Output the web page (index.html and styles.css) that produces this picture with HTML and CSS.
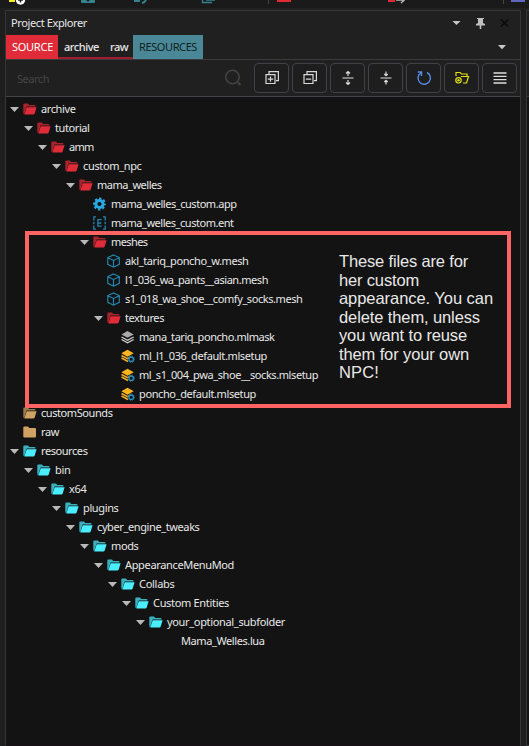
FILE: index.html
```html
<!DOCTYPE html>
<html lang="en">
<head>
<meta charset="utf-8">
<title>Project Explorer</title>
<link rel="stylesheet" href="styles.css">
</head>
<body>
<svg class="defs" width="0" height="0">
  <symbol id="open" viewBox="0 0 14 12"><path d="M.3 10.5V1.6Q.3.6 1.3.6H5L6.2 2H11.500Q12.500 2 12.500 3V3.500H3.500L1.300 11Z" fill="currentColor" opacity=".72"/><path d="M3.700 4.200H13.600L11.700 10.600Q11.400 11.400 10.700 11.400H1.300Z" fill="currentColor"/></symbol>
  <symbol id="closed" viewBox="0 0 14 12"><path d="M.3 1.500Q.3.500 1.300.500H5L6.300 1.900H12Q13 1.900 13 2.900V10.400Q13 11.400 12 11.400H1.300Q.3 11.400.3 10.400Z" fill="currentColor"/></symbol>
  <symbol id="gear" viewBox="0 0 14 14"><circle cx="6.500" cy="7" r="3.600" fill="none" stroke="#29a9e2" stroke-width="3"/><circle cx="6.500" cy="7" r="5.500" fill="none" stroke="#29a9e2" stroke-width="2" stroke-dasharray="2.300 2.020" stroke-dashoffset="1.100"/></symbol>
  <symbol id="ent" viewBox="0 0 14 14"><g fill="none" stroke="#2583b0" stroke-width="1.300"><path d="M3 .8H.8V4.500M.8 5.800V8.200M.8 9.500V13.200H3M10 .8H12.200V4.500M12.200 5.800V8.200M12.200 9.500V13.200H10"/><path d="M8.700 3.700H4.900V10.200H8.700M4.900 7H8.300"/></g></symbol>
  <symbol id="cube" viewBox="0 0 14 14"><path d="M6.500.900 12.300 3.500V10.300L6.500 13.200.8 10.300V3.500ZM.8 3.700 6.500 6.400 12.300 3.700M6.500 6.400V13" fill="none" stroke="#2387b3" stroke-width="1.150"/></symbol>
  <symbol id="mask" viewBox="0 0 14 14"><path d="M.5 4.500 6.500 1 12.700 4.500 6.500 7.800Z" fill="#aaa"/><path d="M.5 7 6.500 10.200 12.700 7M.5 9.500 6.500 12.700 12.700 9.500" fill="none" stroke="#d6d6d6" stroke-width="1.200"/></symbol>
  <symbol id="setup" viewBox="0 0 14 14"><path d="M.4 4.300 6.500.7 12.700 4.300 6.500 7.700Z" fill="#ffb51d"/><path d="M.5 6.500 6.500 9.700 10 8M.5 9 7 12.500" fill="none" stroke="#f4ae23" stroke-width="1.500"/><circle cx="10.200" cy="10.200" r="2.200" fill="#131313" stroke="#2d8fbd" stroke-width="1.300"/><circle cx="10.200" cy="10.200" r="3.200" fill="none" stroke="#2d8fbd" stroke-width=".9" stroke-dasharray="1.250 1.260"/></symbol>
</svg>
<div class="window">
  <header class="strip">
    <svg width="529" height="10" viewBox="0 0 529 10">
      <path d="M9 0H15V2H9Z" fill="#f8ec20"/><circle cx="20.500" cy="0" r="4.700" fill="#fff"/><path d="M18 0H23M20.500 0V2.500" stroke="#222" stroke-width="1.500"/>
      <path d="M81 0H95V2Q95 3 94 3H82Q81 3 81 2Z" fill="#36828e"/><circle cx="88" cy="0" r="1.500" fill="#1c1c1c"/>
      <path d="M134 1H140M142 3Q145 2 146 0" fill="none" stroke="#36828e" stroke-width="2"/>
      <path d="M202.500 0V2.500H212M206 0H215" fill="none" stroke="#36828e" stroke-width="1.300"/>
      <path d="M277 0H291V2H277ZM388 0H395V2H388Z" fill="#df2935"/>
      <path d="M396 0H404M401 3 404.500 0" fill="none" stroke="#bbb" stroke-width="1.400"/>
      <path d="M511 0H525V2H511Z" fill="#6066bd"/><path d="M268.500 0V4M503.500 0V4" stroke="#444"/>
    </svg>
  </header>
  <div class="workspace">
    <main class="panel">
      <div class="titlebar">
        <span class="fit" data-width="76">Project Explorer</span>
        <div class="title-actions">
          <svg width="60" height="16" viewBox="0 0 60 16"><path d="M.5 6H8.500L4.500 10Z" fill="#c8c8c8"/><path d="M25 3H32V4H31V8L33 9V10.500H29.300V14H27.700V10.500H24V9L26 8V4H25Z" fill="#c0c0c0"/><path d="M49 4.500 56 11.500M56 4.500 49 11.500" stroke="#090909" stroke-width="1.500"/></svg>
        </div>
      </div>
      <nav class="tabs">
        <div class="tab source"><span class="fit" data-width="41">SOURCE</span></div>
        <div class="tab archive"><span class="fit" data-width="35">archive</span></div>
        <div class="tab raw"><span class="fit" data-width="18">raw</span></div>
        <div class="tab resources"><span class="fit" data-width="58">RESOURCES</span></div>
        <svg class="tab-menu" width="8" height="5" viewBox="0 0 8 5"><path d="M0 0H8L4 4.200Z" fill="#c8c8c8"/></svg>
      </nav>
      <div class="toolbar">
        <div class="search"><span class="fit" data-width="32">Search</span>
          <svg width="17" height="18" viewBox="0 0 17 18"><circle cx="7.500" cy="8" r="6.700" fill="none" stroke="#444" stroke-width="1.500"/><path d="M13 13.500 15.500 16" stroke="#444" stroke-width="2"/></svg>
        </div>
        <div class="buttons">
          <button><svg viewBox="0 0 20 20"><g fill="none" stroke="#d8d8d8" stroke-width="1.200"><path d="M7 6V3.700H16.400V12.600H14M4 6.700H13V15.500H4ZM8.500 8.500V13.800M5.800 11.100H11.200"/></g></svg></button>
          <button><svg viewBox="0 0 20 20"><g fill="none" stroke="#d8d8d8" stroke-width="1.200"><path d="M7 6V3.700H16.400V12.600H14M4 6.700H13V15.500H4ZM5.800 11.100H11.200"/></g></svg></button>
          <button><svg viewBox="0 0 20 20"><path d="M4.500 10H15.500M10 8V4M10 12V16M8 5.500 10 3.500 12 5.500M8 14.500 10 16.500 12 14.500" fill="none" stroke="#ddd" stroke-width="1.200"/></svg></button>
          <button><svg viewBox="0 0 20 20"><path d="M4.500 10H15.500M10 3.500V7.500M10 12.500V16.500M8.300 6 10 7.700 11.700 6M8.300 14 10 12.300 11.700 14" fill="none" stroke="#ddd" stroke-width="1.200"/></svg></button>
          <button><svg viewBox="0 0 20 20"><path d="M6.700 5A6.200 6.200 0 1 0 13 4.500M3.700 4H7.500V8" fill="none" stroke="#568be5" stroke-width="1.400"/></svg></button>
          <button><svg viewBox="0 0 20 20"><g fill="none" stroke="#e2df16" stroke-width="1.200"><path d="M4 8V4.500H8L9.500 6H15V8M9 8.500H16.500L14.500 15H11"/><circle cx="6.500" cy="12.300" r="2.700"/></g><circle cx="6.500" cy="12.300" r="1.200" fill="#e2df16"/></svg></button>
          <button><svg viewBox="0 0 20 20"><path d="M3.500 5H16.500M3.500 8.300H16.500M3.500 11.600H16.500M3.500 15H16.500" stroke="#ddd" stroke-width="1.300"/></svg></button>
        </div>
      </div>
      <div class="tree" id="tree"></div>
      <aside class="note">
        <span class="fit" data-width="129">These files are for</span>
        <span class="fit" data-width="80">her custom</span>
        <span class="fit" data-width="154">appearance. You can</span>
        <span class="fit" data-width="141">delete them, unless</span>
        <span class="fit" data-width="128">you want to reuse</span>
        <span class="fit" data-width="130">them for your own</span>
        <span class="fit" data-width="40">NPC!</span>
      </aside>
    </main>
    <div class="neighbor"><div class="neighbor-head"></div></div>
  </div>
</div>
<script src="script.js"></script>
</body>
</html>
```
FILE: styles.css
```css
* { box-sizing: border-box; }
body { margin: 0; background: #1e1e1e; color: #e8e8e8; font: 11px/19px "Noto Sans", "Open Sans", sans-serif; overflow: hidden; }
.defs { position: absolute; }
.window { width: 529px; height: 746px; display: flex; flex-direction: column; background: #1e1e1e; }
.strip { height: 10px; flex: none; background: linear-gradient(#1a1a1a 8px, #202020 8px); }
.strip svg { display: block; }
.workspace { flex: 1; display: flex; gap: 5px; padding-left: 5px; min-height: 0; }
.panel { position: relative; width: 516px; flex: none; display: flex; flex-direction: column; border: 1px solid #363636; border-bottom-color: #171116; background: #202020; }
.fit { display: inline-block; white-space: pre; }
.titlebar { height: 24px; flex: none; display: flex; align-items: center; justify-content: space-between; padding: 0 8px 1px 5px; }
.title-actions { display: flex; width: 60px; }
.tabs { height: 25px; flex: none; display: flex; border-bottom: 1px solid #3b3b3b; }
.tab { height: 24px; display: flex; align-items: center; padding: 0 0 1px 6px; }
.source { width: 52px; background: #e02b38; color: #fff; }
.archive, .raw { border-bottom: 2px solid #9f1c2f; padding-top: 1px; font-weight: 500; }
.archive { width: 46px; }
.raw { width: 29px; }
.resources { width: 70px; background: #4b8897; color: #101e22; }
.tab-menu { margin: 10px 14px 0 auto; }
.toolbar { height: 37px; flex: none; display: flex; justify-content: space-between; border-bottom: 1px solid #45424a; padding: 3px 3px 3px 11px; }
.search { width: 225px; display: flex; align-items: center; justify-content: space-between; color: #464646; }
.buttons { display: flex; gap: 3px; }
button { width: 35px; height: 30px; padding: 0; display: grid; place-items: center; border: 1px solid #414147; border-radius: 4px; background: #1e1e1e; }
button svg { width: 20px; height: 20px; }
.tree { flex: 1; min-height: 0; background: #131313; padding-top: 2px; }
.row { height: 19px; display: flex; align-items: center; }
.arrow { width: 9px; height: 5px; flex: none; margin: 2px 4px 0 4px; background: #b9b9b9; clip-path: polygon(0 0, 100% 0, 50% 100%); }
.arrow.none { visibility: hidden; }
.icon { width: 14px; height: 14px; flex: none; margin-right: 4px; }
.red { color: #e02b38; }
.cyan { color: #4beeff; }
.tan { color: #d0a263; }
.note { position: absolute; left: 19px; top: 220px; width: 486px; height: 177px; border: 4px solid #ff6464; padding: 17px 0 0 310px; display: flex; flex-direction: column; align-items: flex-start; color: #e8e8e8; font: 16.5px/18.5px "Liberation Sans", Arial, sans-serif; }
.neighbor { flex: 1; border: 1px solid #363636; border-right: 0; background: #131313; }
.neighbor-head { height: 86px; background: #202020; border-bottom: 1px solid #363636; }
```
FILE: script.js
```js
// depth, icon, colour, label, label width
const rows = [
  [0, "open", "red", "archive", 34.5],
  [1, "open", "red", "tutorial", 34.5],
  [2, "open", "red", "amm", 24.5],
  [3, "open", "red", "custom_npc", 58.5],
  [4, "open", "red", "mama_welles", 64.5],
  [5, "gear", "", "mama_welles_custom.app", 125.5],
  [5, "ent", "", "mama_welles_custom.ent", 122.5],
  [5, "open", "red", "meshes", 36.5],
  [6, "cube", "", "akl_tariq_poncho_w.mesh", 123.5],
  [6, "cube", "", "l1_036_wa_pants__asian.mesh", 143],
  [6, "cube", "", "s1_018_wa_shoe__comfy_socks.mesh", 177.5],
  [6, "open", "red", "textures", 39],
  [7, "mask", "", "mana_tariq_poncho.mlmask", 135.5],
  [7, "setup", "", "ml_l1_036_default.mlsetup", 128],
  [7, "setup", "", "ml_s1_004_pwa_shoe__socks.mlsetup", 179],
  [7, "setup", "", "poncho_default.mlsetup", 117],
  [0, "open", "tan", "customSounds", 71.5],
  [0, "closed", "tan", "raw", 18],
  [0, "open", "cyan", "resources", 46.5],
  [1, "open", "cyan", "bin", 15.5],
  [2, "open", "cyan", "x64", 17.5],
  [3, "open", "cyan", "plugins", 35.5],
  [4, "open", "cyan", "cyber_engine_tweaks", 102.5],
  [5, "open", "cyan", "mods", 27.5],
  [6, "open", "cyan", "AppearanceMenuMod", 109],
  [7, "open", "cyan", "Collabs", 35.5],
  [8, "open", "cyan", "Custom Entities", 76],
  [9, "open", "cyan", "your_optional_subfolder", 118],
  [10, "", "", "Mama_Welles.lua", 83.5]
];

document.getElementById("tree").innerHTML = rows.map(([depth, icon, color, label, width]) => {
  const expandable = icon === "open" && color !== "tan";
  return `<div class="row" style="padding-left:${depth * 14}px"><i class="arrow${expandable ? "" : " none"}"></i><svg class="icon ${color}">${icon ? `<use href="#${icon}"/>` : ""}</svg><span class="fit" data-width="${width}">${label}</span></div>`;
}).join("");

document.querySelectorAll(".fit").forEach(el => {
  const natural = el.getBoundingClientRect().width;
  el.style.letterSpacing = (el.dataset.width - natural) / el.textContent.length + "px";
});
```
